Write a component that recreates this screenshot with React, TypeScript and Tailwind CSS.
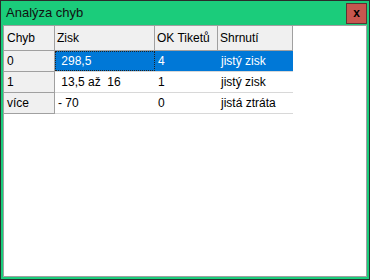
import React from 'react';

interface RowType {
  label: string;
  zisk: string;
  tikety: string;
  shrnuti: string;
}

const rows: RowType[] = [
  { label: '0', zisk: '\u00a0298,5', tikety: '4', shrnuti: 'jistý zisk' },
  { label: '1', zisk: '\u00a013,5 až\u00a0\u00a016', tikety: '1', shrnuti: 'jistý zisk' },
  { label: 'více', zisk: '- 70', tikety: '0', shrnuti: 'jistá ztráta' },
];

const font = { fontFamily: '"Liberation Sans", Arial, sans-serif' };

const App: React.FC = () => {
  return (
    <div
      className="w-[370px] h-[280px] bg-[#1bcc7b] border border-[#2b2b2b] flex flex-col"
      style={font}
    >
      <div className="h-[24px] flex items-center justify-between pl-[5px] pr-[2px]">
        <span className="text-[13px] text-[#111]">Analýza chyb</span>
        <button className="w-[21px] h-[21px] mt-[1px] bg-[#c6574f] border border-[#5b3434] flex items-center justify-center text-[12px] font-bold text-black leading-none pb-[2px]">
          x
        </button>
      </div>
      <div className="flex-1 mx-[2px] mb-[2px] border border-[#a0a0a0] bg-white text-[12px] text-black">
        <div className="flex h-[25px] w-[289px] bg-[#f0f0f0] border-b border-[#a0a0a0]">
          <div className="w-[51px] border-r border-[#a0a0a0] pl-[3px] flex items-center">Chyb</div>
          <div className="w-[100px] border-r border-[#a0a0a0] pl-[2px] flex items-center">Zisk</div>
          <div className="w-[63px] border-r border-[#a0a0a0] pl-[2px] flex items-center">OK Tiketů</div>
          <div className="w-[75px] border-r border-[#a0a0a0] pl-[2px] flex items-center">Shrnutí</div>
        </div>
        {rows.map((r, i) => {
          const sel = i === 0;
          return (
            <div key={r.label} className="flex h-[21px] w-[289px]">
              <div className="w-[51px] bg-[#f0f0f0] border-r border-b border-[#a0a0a0] pl-[3px] flex items-center">
                {r.label}
              </div>
              <div
                className={
                  sel
                    ? 'flex w-[238px] bg-[#0078d7] text-white border-b border-[#d8d8d8]'
                    : 'flex w-[238px] border-b border-[#d8d8d8]'
                }
              >
                <div
                  className={
                    sel
                      ? 'w-[100px] pl-[2px] flex items-center border border-dotted border-[#222]'
                      : 'w-[100px] pl-[3px] flex items-center'
                  }
                >
                  {r.zisk}
                </div>
                <div className="w-[63px] pl-[3px] flex items-center">{r.tikety}</div>
                <div className="w-[75px] pl-[3px] flex items-center">{r.shrnuti}</div>
              </div>
            </div>
          );
        })}
      </div>
    </div>
  );
};

export default App;
